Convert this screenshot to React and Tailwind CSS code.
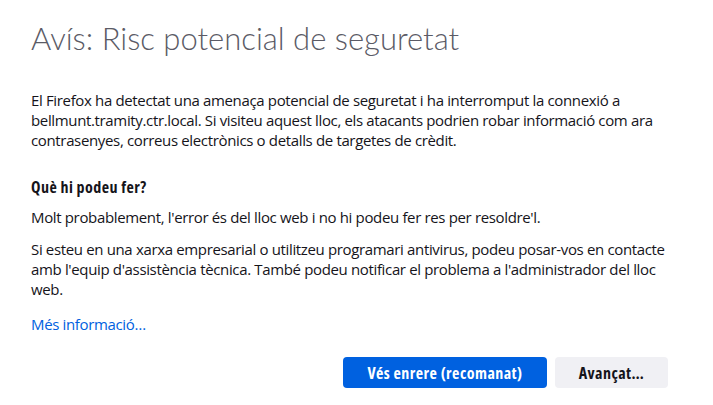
export default function App() {
  const body = { fontFamily: "'Open Sans', 'Noto Sans', sans-serif" };

  return (
    <div className="min-h-screen w-full bg-white pl-[31px] pt-[20px] text-[#15141a]">
      <div className="w-[637px]">
        {/* Title */}
        <h1
          className="whitespace-nowrap text-[31px] leading-[36px] font-light text-[#5b5b66]"
          style={{ fontFamily: "Lato, 'Open Sans', sans-serif" }}
        >
          Avís: Risc potencial de seguretat
        </h1>

        <div className="text-[15px] leading-[20px] tracking-[-0.35px]" style={body}>
          <p className="mt-[34px]">
            El Firefox ha detectat una amenaça potencial de seguretat i ha interromput la connexió a
            bellmunt.tramity.ctr.local. Si visiteu aquest lloc, els atacants podrien robar informació com ara
            contrasenyes, correus electrònics o detalls de targetes de crèdit.
          </p>

          <h2 className="mt-[27px] text-[16px] font-bold tracking-[0.45px] [font-stretch:75%]">
            Què hi podeu fer?
          </h2>

          <p className="mt-[10px]">
            Molt probablement, l'error és del lloc web i no hi podeu fer res per resoldre'l.
          </p>

          <p className="mt-[12px]">
            Si esteu en una xarxa empresarial o utilitzeu programari antivirus, podeu posar-vos en contacte
            amb l'equip d'assistència tècnica. També podeu notificar el problema a l'administrador del lloc
            web.
          </p>

          <a href="#" className="mt-[15px] block w-fit text-[#0061e0]">
            Més informació…
          </a>

          {/* Actions */}
          <div className="mt-[23px] flex justify-end gap-2 text-[16px] tracking-[0.45px] [font-stretch:75%]">
            <button className="h-[31px] w-[204px] rounded-[4px] bg-[#0061e0] font-bold text-white">
              Vés enrere (recomanat)
            </button>
            <button className="h-[31px] w-[113px] rounded-[4px] bg-[#f0f0f4] font-bold text-[#15141a]">
              Avançat…
            </button>
          </div>
        </div>
      </div>
    </div>
  );
}
